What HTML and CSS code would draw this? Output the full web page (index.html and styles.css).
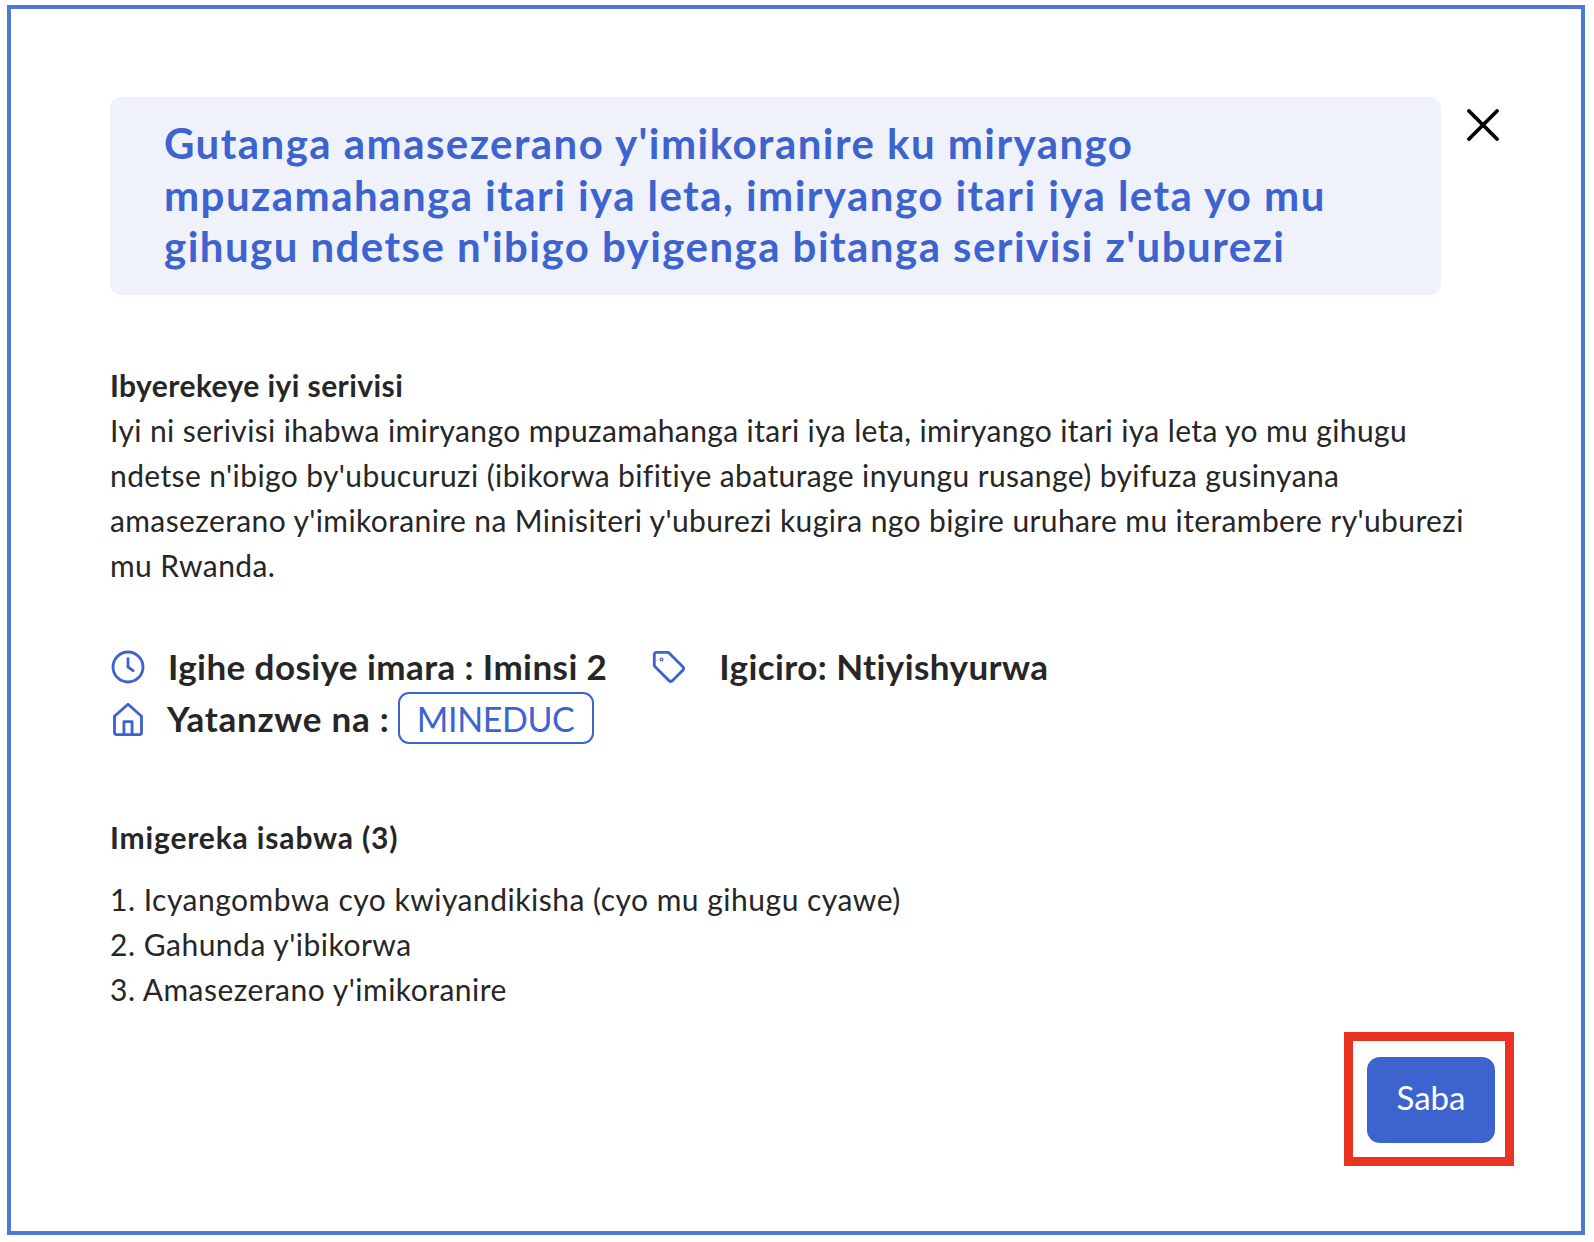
FILE: index.html
```html
<!DOCTYPE html>
<html lang="rw">
<head>
<meta charset="utf-8">
<title>Gutanga amasezerano</title>
<link rel="stylesheet" href="styles.css">
</head>
<body>
<main class="frame">
  <header class="head">
    <h1 class="title">Gutanga amasezerano y'imikoranire ku miryango<br>mpuzamahanga itari iya leta, imiryango itari iya leta yo mu<br>gihugu ndetse n'ibigo byigenga bitanga serivisi z'uburezi</h1>
    <button class="close" aria-label="Close">
      <svg width="32" height="32" viewBox="0 0 32 32"><path d="M2 2 L30 30 M30 2 L2 30" fill="none" stroke="#000" stroke-width="3.8" stroke-linecap="round"/></svg>
    </button>
  </header>
  <section class="about">
    <h2 class="sub">Ibyerekeye iyi serivisi</h2>
    <p class="para">Iyi ni serivisi ihabwa imiryango mpuzamahanga itari iya leta, imiryango itari iya leta yo mu gihugu<br>ndetse n'ibigo by'ubucuruzi (ibikorwa bifitiye abaturage inyungu rusange) byifuza gusinyana<br>amasezerano y'imikoranire na Minisiteri y'uburezi kugira ngo bigire uruhare mu iterambere ry'uburezi<br>mu Rwanda.</p>
  </section>
  <section class="meta">
    <div class="meta-row">
      <svg class="ico" width="36" height="36" viewBox="0 0 24 24"><circle cx="12" cy="12" r="10"/><path d="M12 6.4V12l3.4 2.4"/></svg>
      <span class="meta-text gap-a">Igihe dosiye imara : Iminsi 2</span>
      <svg class="ico tag" width="36" height="36" viewBox="0 0 24 24"><path d="M2.2 3.6a1.4 1.4 0 0 1 1.4-1.4h7.3a1.6 1.6 0 0 1 1.1.5l9.2 9.2a1.6 1.6 0 0 1 0 2.2l-7 7a1.6 1.6 0 0 1-2.2 0L2.7 11.9a1.6 1.6 0 0 1-.5-1.1z"/><circle cx="7" cy="7" r=".4"/></svg>
      <span class="meta-text gap-b">Igiciro: Ntiyishyurwa</span>
    </div>
    <div class="meta-row">
      <svg class="ico" width="36" height="36" viewBox="0 0 24 24"><path d="M3 10.2 12 2.2l9 8V21a1.4 1.4 0 0 1-1.4 1.4H4.4A1.4 1.4 0 0 1 3 21z"/><path d="M9.3 22.4v-8.7h5.4v8.7"/></svg>
      <span class="meta-text gap-c wide">Yatanzwe na :</span>
      <span class="badge">MINEDUC</span>
    </div>
  </section>
  <section class="docs">
    <h2 class="sub wide-sub">Imigereka isabwa (3)</h2>
    <ol class="list">
      <li>1. Icyangombwa cyo kwiyandikisha (cyo mu gihugu cyawe)</li>
      <li>2. Gahunda y'ibikorwa</li>
      <li>3. Amasezerano y'imikoranire</li>
    </ol>
  </section>
  <footer class="foot">
    <div class="highlight"><button class="apply">Saba</button></div>
  </footer>
</main>
</body>
</html>
```
FILE: styles.css
```css
* { box-sizing: border-box; }
html, body { margin: 0; padding: 0; background: #fff; }
body { padding: 5px 9px 7px 7px; font-family: "Lato", "Noto Sans", sans-serif; color: #262626; }
.frame {
  height: 1230px;
  border: 4px solid #4d78d6;
  padding: 88px 0 0 99px;
  display: flex;
  flex-direction: column;
}
.head { display: flex; align-items: flex-start; }
.title {
  width: 1331px;
  height: 198px;
  margin: 0;
  padding: 21px 0 0 54px;
  background: #eff2fb;
  border-radius: 11px;
  color: #3d63cf;
  font-size: 42px;
  letter-spacing: 1.45px;
  line-height: 51.7px;
  font-weight: 700;
  white-space: nowrap;
}
.close {
  margin: 12px 0 0 26px;
  padding: 0;
  border: 0;
  background: none;
  width: 32px;
  height: 32px;
}
.close svg { display: block; }
.about { margin-top: 68px; }
.sub { margin: 0; font-size: 30px; letter-spacing: .42px; line-height: 45px; font-weight: 700; }
.wide-sub { letter-spacing: .85px; }
.para { margin: 0; font-size: 30px; letter-spacing: .39px; line-height: 45px; white-space: nowrap; }
.meta { margin-top: 52px; display: flex; flex-direction: column; gap: 1px; }
.meta-row { display: flex; align-items: center; height: 51px; }
.ico { margin-top: 3px; fill: none; stroke: #3d63cf; stroke-width: 1.9; stroke-linecap: round; stroke-linejoin: round; flex: none; }
.meta-text { font-size: 35px; letter-spacing: .42px; font-weight: 700; white-space: nowrap; }
.gap-a { margin-left: 22px; }
.tag { margin-left: 44px; }
.gap-b { margin-left: 32px; }
.gap-c { margin-left: 21px; }
.wide { letter-spacing: .75px; }
.badge {
  margin: 1px 0 0 8px;
  height: 52px;
  width: 196px;
  display: flex;
  align-items: center;
  justify-content: center;
  border: 2px solid #3d63cf;
  border-radius: 11px;
  color: #3d63cf;
  font-size: 34px;
  letter-spacing: -.4px;
}
.docs { margin-top: 72px; }
.list { list-style: none; margin: 17px 0 0; padding: 0; font-size: 30px; letter-spacing: .5px; line-height: 45px; }
.foot { display: flex; justify-content: flex-end; margin-top: 20px; padding-right: 67px; }
.highlight { border: 9px solid #ea3323; padding: 16px 10px 14px 14px; }
.apply {
  display: block;
  width: 128px;
  height: 86px;
  padding: 0 0 6px;
  border: 0;
  border-radius: 13px;
  background: #3d63cf;
  color: #fff;
  font-family: inherit;
  font-size: 33px;
}
```
